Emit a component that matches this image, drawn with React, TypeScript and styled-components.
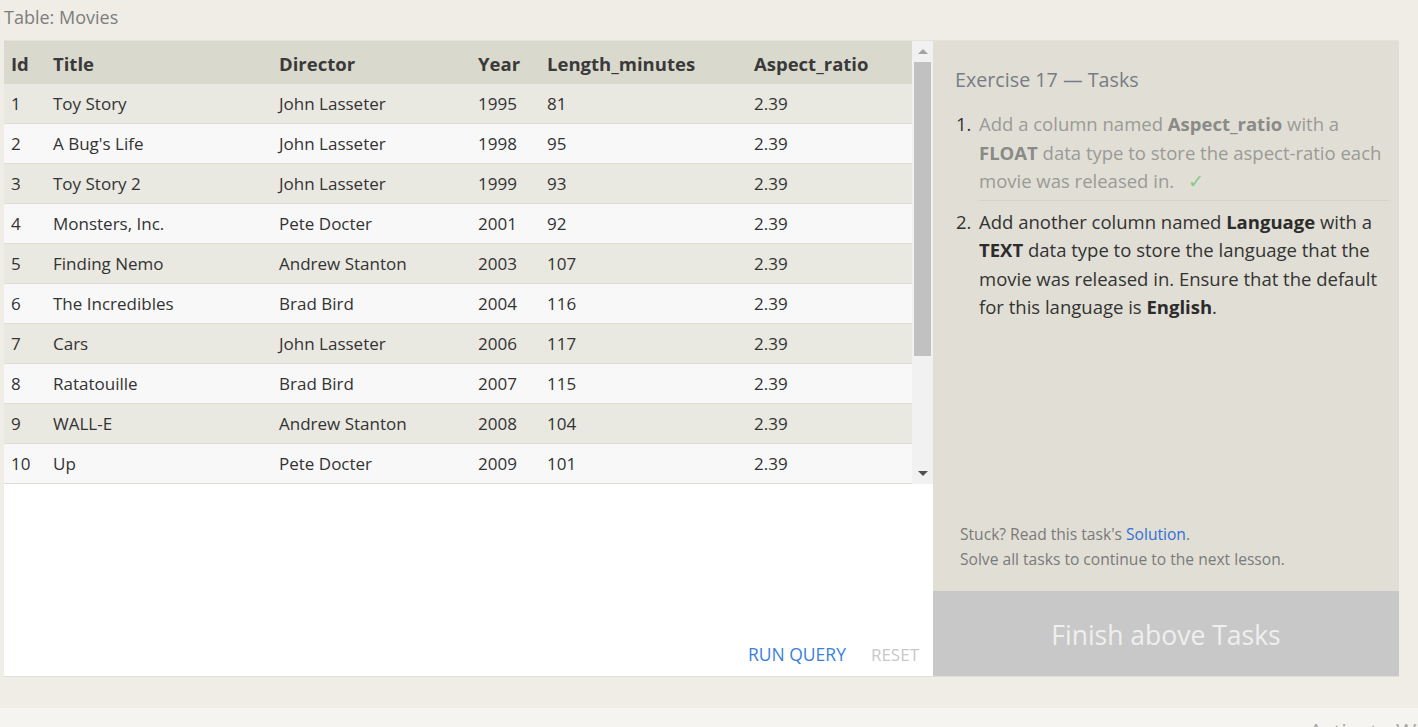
import React from "react";
import styled, { createGlobalStyle } from "styled-components";

const Global = createGlobalStyle`
  html, body { margin: 0; padding: 0; }
  body {
    background: #efede6;
    font-family: "Open Sans", "Liberation Sans", sans-serif;
    color: #333;
    overflow: hidden;
  }
`;

const Page = styled.div`
  width: 1418px;
  height: 727px;
  display: flex;
  flex-direction: column;
  background: #efede6;
`;

const Main = styled.div`
  flex: 1;
  padding: 0 19px 0 4px;
  display: flex;
  flex-direction: column;
`;

const TableLabel = styled.div`
  height: 40px;
  display: flex;
  align-items: center;
  font-size: 18px;
  color: #7d7d7d;
  padding-bottom: 7px;
  box-sizing: border-box;
`;

const Panels = styled.div`
  display: flex;
  height: 635px;
  border-top: 1px solid #e4e2da;
  box-shadow: 0 1px 0 #e0ded5;
`;

const LeftPanel = styled.div`
  width: 929px;
  display: flex;
  flex-direction: column;
  background: #fff;
`;

const TableArea = styled.div`
  height: 443px;
  display: flex;
`;

const TableScroll = styled.div`
  flex: 1;
  overflow: hidden;
`;

const Row = styled.div<{ $kind: "head" | "odd" | "even" }>`
  display: grid;
  grid-template-columns: 42px 226px 199px 69px 207px 1fr;
  align-items: center;
  height: ${(p) => (p.$kind === "head" ? "43px" : "40px")};
  box-sizing: border-box;
  padding-top: ${(p) => (p.$kind === "head" ? "2px" : "0")};
  background: ${(p) =>
    p.$kind === "head" ? "#dad9cd" : p.$kind === "odd" ? "#e9e8e1" : "#f8f8f8"};
  border-bottom: ${(p) => (p.$kind === "head" ? "none" : "1px solid #dedcd3")};
  font-size: ${(p) => (p.$kind === "head" ? "18.5px" : "17px")};
  font-weight: ${(p) => (p.$kind === "head" ? 700 : 400)};
  color: ${(p) => (p.$kind === "head" ? "#3a3a3a" : "#333")};
`;

const Cell = styled.div`
  padding-left: 7px;
  white-space: nowrap;
  overflow: hidden;
`;

const ScrollBar = styled.div`
  width: 21px;
  background: #f1f1f1;
  display: flex;
  flex-direction: column;
  align-items: center;
`;

const ArrowBox = styled.div`
  height: 21px;
  width: 100%;
  display: flex;
  align-items: center;
  justify-content: center;
`;

const UpTri = styled.div`
  width: 0;
  height: 0;
  border-left: 5px solid transparent;
  border-right: 5px solid transparent;
  border-bottom: 5px solid #a3a3a3;
`;

const DownTri = styled.div`
  width: 0;
  height: 0;
  border-left: 5px solid transparent;
  border-right: 5px solid transparent;
  border-top: 5px solid #505050;
`;

const Thumb = styled.div`
  width: 17px;
  height: 294px;
  background: #c1c1c1;
`;

const Spacer = styled.div`
  flex: 1;
`;

const Editor = styled.div`
  flex: 1;
  display: flex;
  align-items: flex-end;
  justify-content: flex-end;
  gap: 25px;
  padding: 0 14px 10px 0;
  background: #fff;
`;

const QueryButton = styled.span<{ $disabled?: boolean }>`
  font-size: ${(p) => (p.$disabled ? "17px" : "17.5px")};
  text-transform: uppercase;
  color: ${(p) => (p.$disabled ? "#c8c8c8" : "#3b7fdc")};
`;

const RightPanel = styled.div`
  width: 466px;
  display: flex;
  flex-direction: column;
  background: #e1dfd5;
`;

const TaskContent = styled.div`
  flex: 1;
  padding: 25px 10px 0 22px;
  display: flex;
  flex-direction: column;
`;

const TaskTitle = styled.div`
  font-size: 19.7px;
  color: #777c86;
  line-height: 28px;
`;

const TaskList = styled.div`
  margin-top: 16px;
  display: flex;
  flex-direction: column;
  gap: 7px;
`;

const TaskItem = styled.div`
  display: flex;
  font-size: 18.5px;
  line-height: 28.5px;
`;

const TaskNum = styled.span`
  width: 24px;
  flex: none;
  padding-left: 1px;
  box-sizing: border-box;
  color: #333;
`;

const TaskBody = styled.div<{ $done?: boolean }>`
  flex: 1;
  color: ${(p) => (p.$done ? "#9a9a96" : "#333")};
  border-bottom: ${(p) => (p.$done ? "1px solid #d6d4ca" : "none")};
  padding-bottom: ${(p) => (p.$done ? "4px" : "0")};
  b {
    color: ${(p) => (p.$done ? "#8a8a87" : "#2c2c2c")};
  }
`;

const Check = styled.span`
  color: #87c987;
  margin-left: 14px;
`;

const Help = styled.div`
  padding: 0 0 19px 27px;
  font-size: 15.6px;
  line-height: 25px;
  color: #7a7a7a;
`;

const Link = styled.span`
  color: #2f6fd6;
`;

const FinishButton = styled.div`
  height: 85px;
  background: #c8c8c8;
  color: #efefef;
  font-size: 26.5px;
  display: flex;
  align-items: center;
  justify-content: center;
  padding-top: 2px;
  box-sizing: border-box;
`;

const Footer = styled.div`
  height: 19px;
  background: #f5f4f0;
  overflow: hidden;
  display: flex;
  justify-content: flex-start;
  padding-left: 1309px;
`;

const Watermark = styled.span`
  font-size: 22px;
  color: #a9a9a9;
  padding-top: 8px;
  white-space: nowrap;
`;

const columns = ["Id", "Title", "Director", "Year", "Length_minutes", "Aspect_ratio"];

const movies: [number, string, string, number, number, number][] = [
  [1, "Toy Story", "John Lasseter", 1995, 81, 2.39],
  [2, "A Bug's Life", "John Lasseter", 1998, 95, 2.39],
  [3, "Toy Story 2", "John Lasseter", 1999, 93, 2.39],
  [4, "Monsters, Inc.", "Pete Docter", 2001, 92, 2.39],
  [5, "Finding Nemo", "Andrew Stanton", 2003, 107, 2.39],
  [6, "The Incredibles", "Brad Bird", 2004, 116, 2.39],
  [7, "Cars", "John Lasseter", 2006, 117, 2.39],
  [8, "Ratatouille", "Brad Bird", 2007, 115, 2.39],
  [9, "WALL-E", "Andrew Stanton", 2008, 104, 2.39],
  [10, "Up", "Pete Docter", 2009, 101, 2.39],
  [11, "Toy Story 3", "Lee Unkrich", 2010, 103, 2.39],
  [12, "Cars 2", "John Lasseter", 2011, 120, 2.39],
  [13, "Brave", "Brenda Chapman", 2012, 102, 2.39],
  [14, "Monsters University", "Dan Scanlon", 2013, 110, 2.39],
];

export default function App() {
  return (
    <Page>
      <Global />
      <Main>
        <TableLabel>Table: Movies</TableLabel>
        <Panels>
          <LeftPanel>
            <TableArea>
              <TableScroll>
                <Row $kind="head">
                  {columns.map((c) => (
                    <Cell key={c}>{c}</Cell>
                  ))}
                </Row>
                {movies.map((m, i) => (
                  <Row key={m[0]} $kind={i % 2 === 0 ? "odd" : "even"}>
                    {m.map((v, j) => (
                      <Cell key={j}>{j === 5 ? Number(v).toFixed(2) : v}</Cell>
                    ))}
                  </Row>
                ))}
              </TableScroll>
              <ScrollBar>
                <ArrowBox>
                  <UpTri />
                </ArrowBox>
                <Thumb />
                <Spacer />
                <ArrowBox>
                  <DownTri />
                </ArrowBox>
              </ScrollBar>
            </TableArea>
            <Editor>
              <QueryButton>Run Query</QueryButton>
              <QueryButton $disabled>Reset</QueryButton>
            </Editor>
          </LeftPanel>
          <RightPanel>
            <TaskContent>
              <TaskTitle>Exercise 17 — Tasks</TaskTitle>
              <TaskList>
                <TaskItem>
                  <TaskNum>1.</TaskNum>
                  <TaskBody $done>
                    Add a column named <b>Aspect_ratio</b> with a <b>FLOAT</b> data type to store
                    the aspect-ratio each movie was released in.
                    <Check>✓</Check>
                  </TaskBody>
                </TaskItem>
                <TaskItem>
                  <TaskNum>2.</TaskNum>
                  <TaskBody>
                    Add another column named <b>Language</b> with a <b>TEXT</b> data type to store
                    the language that the movie was released in. Ensure that the default for this
                    language is <b>English</b>.
                  </TaskBody>
                </TaskItem>
              </TaskList>
            </TaskContent>
            <Help>
              Stuck? Read this task's <Link>Solution</Link>.
              <br />
              Solve all tasks to continue to the next lesson.
            </Help>
            <FinishButton>Finish above Tasks</FinishButton>
          </RightPanel>
        </Panels>
      </Main>
      <Footer>
        <Watermark>Activate Windows</Watermark>
      </Footer>
    </Page>
  );
}
